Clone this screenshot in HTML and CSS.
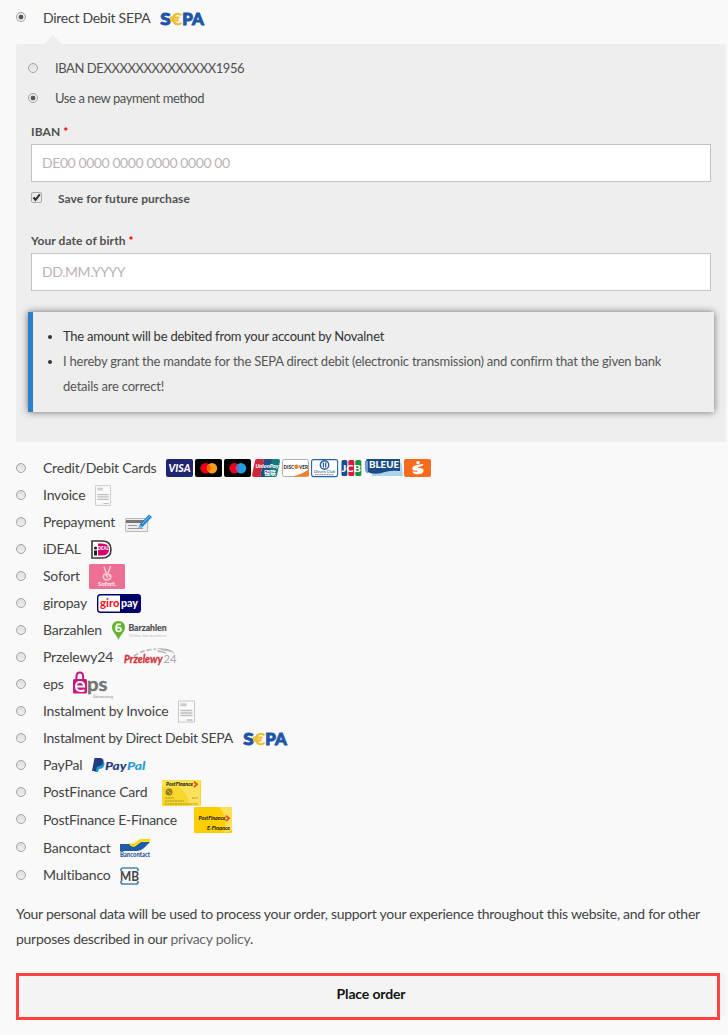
FILE: index.html
```
<!DOCTYPE html>
<html lang="en">
<head>
<meta charset="utf-8">
<title>Checkout payment</title>
<link rel="stylesheet" href="styles.css">
</head>
<body>
<main class="checkout">
  <div class="method method-selected">
    <span class="radio checked"></span>
    <label class="tight">Direct Debit SEPA</label>
    <svg class="icon" width="44" height="14" viewBox="0 0 44 14">
      <text x=".3" y="13.200" font-size="17.300" font-weight="900" fill="#1d56a8" stroke="#1d56a8" stroke-width="1" textLength="10.500" lengthAdjust="spacingAndGlyphs">S</text>
      <path d="M21.500 3.200A5.200 5.200 0 1 0 21.500 10.800M10 5.600H19.500M10 8.300H18.700" fill="none" stroke="#f0bd2c" stroke-width="2.200"/>
      <text x="22.300" y="13.200" font-size="17.300" font-weight="900" fill="#1d56a8" stroke="#1d56a8" stroke-width="1" textLength="21.500" lengthAdjust="spacingAndGlyphs">PA</text>
    </svg>
  </div>

  <section class="panel">
    <div class="saved"><span class="radio"></span><span>IBAN DEXXXXXXXXXXXXXX1956</span></div>
    <div class="saved"><span class="radio checked"></span><span>Use a new payment method</span></div>
    <div class="field-label iban-label">IBAN <b>*</b></div>
    <input class="field" type="text" placeholder="DE00 0000 0000 0000 0000 00">
    <div class="save">
      <svg class="checkbox" width="11" height="11" viewBox="0 0 11 11"><rect x=".5" y=".5" width="10" height="10" rx="1.500" fill="#eaeaea" stroke="#aaa"/><path d="M2.500 5.500l2 2.300L8.800 2.400" fill="none" stroke="#333" stroke-width="2.100"/></svg>
      <span>Save for future purchase</span>
    </div>
    <div class="field-label birth-label">Your date of birth <b>*</b></div>
    <input class="field" type="text" placeholder="DD.MM.YYYY">
    <ul class="notice">
      <li>The amount will be debited from your account by Novalnet</li>
      <li><span>I hereby grant the mandate for the SEPA direct debit (electronic transmission) and confirm that the given bank<br>details are correct!</span></li>
    </ul>
  </section>

  <div class="methods">
    <div class="method"><span class="radio"></span><label>Credit/Debit Cards</label>
      <svg class="icon cards" width="266" height="18" viewBox="0 0 266 18">
        <rect width="27" height="18" rx="2" fill="#21246f"/>
        <text x="2.500" y="12.800" font-size="10.500" font-weight="900" font-style="italic" fill="#fff" textLength="22" lengthAdjust="spacingAndGlyphs">VISA</text>
        <rect x="29" width="27" height="18" rx="2"/>
        <circle cx="39.500" cy="9.300" r="5.200" fill="#eb001b"/><circle cx="46" cy="9.300" r="5.200" fill="#f79e1b"/><path d="M42.750 5.300a5.200 5.200 0 0 1 0 8 5.200 5.200 0 0 1 0-8z" fill="#ff5f00"/>
        <rect x="58" width="27" height="18" rx="2"/>
        <circle cx="68.500" cy="9.300" r="5.200" fill="#eb001b"/><circle cx="75" cy="9.300" r="5.200" fill="#1da1e2"/><path d="M71.750 5.300a5.200 5.200 0 0 1 0 8 5.200 5.200 0 0 1 0-8z" fill="#6c6bbd"/>
        <path d="M91 0h7l-4 18h-6q-2 0-2-2l3-14q0-2 2-2z" fill="#d0253a"/><path d="M98 0h9l-4 18h-9z" fill="#224b83"/><path d="M106 0h6q2 0 2 2l-3 14q0 2-2 2h-7z" fill="#137a80"/>
        <text x="89.500" y="8.500" font-size="6.300" font-weight="900" font-style="italic" fill="#fff" textLength="23" lengthAdjust="spacingAndGlyphs">UnionPay</text>
        <text class="cjk" x="98" y="15.800" font-size="6" font-weight="700" fill="#fff" textLength="12" lengthAdjust="spacingAndGlyphs">银联</text>
        <rect x="116.500" y=".5" width="26" height="17" rx="2" fill="#fff" stroke="#999" stroke-width=".8"/>
        <path d="M143 10v6q0 1.500-2 1.500h-15Q137 15 143 10z" fill="#f58228"/>
        <text x="117.500" y="10" font-size="6.200" font-weight="900" fill="#333" textLength="10.500" lengthAdjust="spacingAndGlyphs">DISC</text><circle cx="130.500" cy="7.800" r="2.200" fill="#f58228"/><text x="133" y="10" font-size="6.200" font-weight="900" fill="#333" textLength="9" lengthAdjust="spacingAndGlyphs">VER</text>
        <rect x="145.600" y=".6" width="26" height="17" rx="2" fill="#fff" stroke="#2765a1" stroke-width="1.100"/>
        <circle cx="158.500" cy="6" r="4.200" fill="#fff" stroke="#2460a0" stroke-width="1.400"/><path d="M157.400 3.500v5M159.700 3.500v5" stroke="#2460a0" stroke-width="1.300"/>
        <text x="148" y="14" font-size="4.500" fill="#17446e" textLength="21" lengthAdjust="spacingAndGlyphs">Diners Club</text><path d="M149 15.700h19" stroke="#5f7d98" stroke-dasharray="1.200 .5"/>
        <rect x="175.500" y="1" width="5.800" height="16" rx="1.500" fill="#164d94"/><rect x="182.300" y="1" width="6" height="16" rx="1.500" fill="#d51c40"/><rect x="189.300" y="1" width="6" height="16" rx="1.500" fill="#159044"/>
        <text x="175.500" y="12.500" font-size="9.500" font-weight="900" fill="#fff" textLength="19.500" lengthAdjust="spacingAndGlyphs">JCB</text>
        <path d="M204 3h29q3 0 3 4l1 10h-31z" fill="#acd4ed"/><path d="M201 0h33v12q-8-1-15 1-8 3-15 1-4-1-4-5V3q0-3 1-3z" fill="#194c86"/><path d="M199 2v8q0 4 3 4V2z" fill="#6f9ec8"/>
        <text x="203" y="8.800" font-size="8.800" font-weight="900" fill="#fff" textLength="30" lengthAdjust="spacingAndGlyphs">BLEUE</text>
        <rect x="238" width="27" height="18" rx="2" fill="#f76b1c"/><circle cx="252" cy="3.600" r="1.700" fill="#fff"/><path d="M257.500 5c-5 .5-10 1-11 3.800-.8 2.400 1.200 3 4 3 2 0 2 1-.2 1l-4-.4c1 4 10.500 4 11.200-.3.300-2.300-1.500-3-4-3-2 0-2-.8-.5-1.300 2-.4 3.800-1 4.500-2.800z" fill="#fff"/>
      </svg></div>
    <div class="method"><span class="radio"></span><label>Invoice</label>
      <svg class="icon faded" width="16" height="21" viewBox="0 0 17 22"><path d="M.5.5h16v21H.5z" fill="#f9f9f9" stroke="#c2c2c2"/><path d="M2.500 3.500h6M2.500 5h6" stroke="#c2c2c2" stroke-width="1.400"/><path d="M2.500 10h12M2.500 12.500h12M2.500 15h12M9 19.500h5.500" stroke="#b5b5b5" stroke-width="1.300"/></svg></div>
    <div class="method"><span class="radio"></span><label>Prepayment</label>
      <svg class="icon" width="28" height="20" viewBox="0 0 28 20"><path d="M.7 5.500h22v13H.7z" fill="#eee" stroke="#b8b8b8"/><path d="M1 8.500h19" stroke="#777" stroke-width="3"/><path d="M3 12.500h9M3 15.500h15" stroke="#999"/><path d="M13 16l2-5L24 1.500l3 2.500-9.500 10z" fill="#2487ca"/><path d="M13 16l2-4 2.300 2z" fill="#8abbe0"/><path d="M17 11L25 3" stroke="#7bc0ec"/></svg></div>
    <div class="method"><span class="radio"></span><label>iDEAL</label>
      <svg class="icon" width="21" height="19" viewBox="0 0 21 19"><path d="M1 1h10q9 0 9 8.500T11 18H1z" fill="#fff" stroke="#3a3a3a" stroke-width="1.600"/><path d="M7 3.500h4q7 0 7 6t-7 6H7z" fill="#d50072"/><circle cx="4.500" cy="8" r="1.600" fill="#222"/><path d="M3 10.500h3v5H3z" fill="#222"/><text x="6.800" y="9.800" font-size="5.600" font-weight="900" fill="#fff" textLength="10.800" lengthAdjust="spacingAndGlyphs">DEAL</text></svg></div>
    <div class="method"><span class="radio"></span><label>Sofort</label>
      <svg class="icon near" width="36" height="25" viewBox="0 0 36 25"><rect width="36" height="25" rx="1.500" fill="#ed6f93"/><path d="M15.200 3.200l2 6M21.500 2.500l-2.700 7M15 10.500h5.500q2 1 1.300 3-1 2.500-4 2.500t-3.700-3.500zM17 11l1.500 2.500M20 10.500l1 2" fill="none" stroke="#fbc9d8" stroke-width="1.500" stroke-linecap="round"/><text x="9" y="22" font-size="6" font-weight="900" fill="#fbd3df" stroke="#fbd3df" stroke-width=".3" textLength="18" lengthAdjust="spacingAndGlyphs">Sofort.</text></svg></div>
    <div class="method"><span class="radio"></span><label>giropay</label>
      <svg class="icon" width="44" height="19" viewBox="0 0 44 19"><rect x=".7" y=".7" width="42.600" height="17.600" rx="2.500" fill="#fff" stroke="#000269" stroke-width="1.400"/><path d="M23 1h18q2 0 2 2v13q0 2-2 2H23z" fill="#000269"/><text x="3" y="12.500" font-size="10.500" font-weight="900" fill="#f21a2b" textLength="19.500" lengthAdjust="spacingAndGlyphs">giro</text><text x="24" y="12.500" font-size="10.500" font-weight="900" fill="#fff" textLength="17" lengthAdjust="spacingAndGlyphs">pay</text></svg></div>
    <div class="method"><span class="radio"></span><label>Barzahlen</label>
      <svg class="icon" width="56" height="19" viewBox="0 0 56 19"><path d="M6.500 0C2.500 0 0 2.800 0 6.300 0 11 5 14 6.500 19 8 14 13 11 13 6.300 13 2.800 10.500 0 6.500 0z" fill="#62b32d"/><path d="M9 3.300H5.300Q4 5 4 7.500q0 3 2.500 3T9 8.300Q9 6 5 6.800" fill="none" stroke="#fff" stroke-width="1.700"/><text x="16.500" y="9.500" font-size="8.600" font-weight="700" fill="#4c4c4c" stroke="#4c4c4c" stroke-width=".2" textLength="38" lengthAdjust="spacingAndGlyphs">Barzahlen</text><text x="17" y="15.800" font-size="4.600" fill="#bbb" textLength="37" lengthAdjust="spacingAndGlyphs">Online bar bezahlen</text></svg></div>
    <div class="method"><span class="radio"></span><label>Przelewy24</label>
      <svg class="icon przelewy" width="53" height="19" viewBox="0 0 53 19"><path d="M10 8Q18 2 32 1" fill="none" stroke="#bbb" stroke-width="1.700" stroke-dasharray="5 2"/><path d="M32 0q16 0 19 6-4-3-10-3zM33 2q9 1 10 4-5-2-9-2z" fill="#b5b5b5"/><text x="0" y="15.300" font-size="11.500" font-weight="700" font-style="italic" fill="#d13239" stroke="#d13239" stroke-width=".3" textLength="38.500" lengthAdjust="spacingAndGlyphs">Przelewy</text><text x="39.500" y="15" font-size="12" fill="#aaa" textLength="13" lengthAdjust="spacingAndGlyphs">24</text></svg></div>
    <div class="method"><span class="radio"></span><label>eps</label>
      <svg class="icon near" width="41" height="26" viewBox="0 0 41 26"><path d="M3.500 8V4.500q0-4 3.300-4t3.300 4V8" fill="none" stroke="#ca1680" stroke-width="2"/><rect y="7" width="14" height="14.500" rx="1.500" fill="#ca1680"/><path d="M2.700 14.500h8.500q0-4.500-4.200-4.500-4 0-4 4.300 0 4.700 4.500 4.700 2 0 4-.8" fill="none" stroke="#fff" stroke-width="2"/><text x="14" y="18.700" font-size="19" font-weight="700" fill="#747474" stroke="#747474" stroke-width=".4" textLength="20.500" lengthAdjust="spacingAndGlyphs">ps</text><text x="20" y="25.500" font-size="3.600" fill="#888" textLength="20" lengthAdjust="spacingAndGlyphs">Überweisung</text></svg></div>
    <div class="method"><span class="radio"></span><label class="wide">Instalment by Invoice</label>
      <svg class="icon" width="17" height="23" viewBox="0 0 17 22"><path d="M.5.5h16v21H.5z" fill="#fbfbfb" stroke="#c5c5c5"/><path d="M2.500 3.500h6M2.500 5h6" stroke="#cacaca" stroke-width="1.400"/><path d="M2.500 10h12M2.500 12.500h12M2.500 15h12M9 19.500h5.500" stroke="#bdbdbd" stroke-width="1.300"/></svg></div>
    <div class="method"><span class="radio"></span><label class="tight">Instalment by Direct Debit SEPA</label>
      <svg class="icon" width="44" height="14" viewBox="0 0 44 14">
        <text x=".3" y="13.200" font-size="17.300" font-weight="900" fill="#1d56a8" stroke="#1d56a8" stroke-width="1" textLength="10.500" lengthAdjust="spacingAndGlyphs">S</text>
        <path d="M21.500 3.200A5.200 5.200 0 1 0 21.500 10.800M10 5.600H19.500M10 8.300H18.700" fill="none" stroke="#f0bd2c" stroke-width="2.200"/>
        <text x="22.300" y="13.200" font-size="17.300" font-weight="900" fill="#1d56a8" stroke="#1d56a8" stroke-width="1" textLength="21.500" lengthAdjust="spacingAndGlyphs">PA</text>
      </svg></div>
    <div class="method"><span class="radio"></span><label>PayPal</label>
      <svg class="icon" width="54" height="15" viewBox="0 0 54 15"><path d="M4 3h6q3.500 1 2 5-1 3-5 3l-1 3H2.500z" fill="#179bd7"/><path d="M2.500 0H8q4.500.5 3.200 4.800Q10 8.500 5 8.500L4 13H0z" fill="#253b80"/><text x="13" y="12" font-size="12" font-weight="900" font-style="italic" fill="#253b80" textLength="21.500" lengthAdjust="spacingAndGlyphs">Pay</text><text x="35" y="12" font-size="12" font-weight="900" font-style="italic" fill="#279bd6" textLength="18.500" lengthAdjust="spacingAndGlyphs">Pal</text></svg></div>
    <div class="method"><span class="radio"></span><label>PostFinance Card</label>
      <svg class="icon postcard" width="39" height="26" viewBox="0 0 39 26"><rect width="39" height="26" rx="1" fill="#f8d72c"/><path d="M17 7q10 8 11 19h10V3z" fill="#fae15b"/><path d="M0 0h38v7H0z" fill="#fbe24d"/><text x="4" y="5.800" font-size="5.600" font-weight="900" font-style="italic" fill="#222" textLength="27" lengthAdjust="spacingAndGlyphs">PostFinance</text><path d="M32 1.700l3 2.500-3 3" fill="none" stroke="#e3501d" stroke-width="1.800"/><circle cx="7" cy="12" r="3.500" fill="#927c2b"/><path d="M5 10l4 4" stroke="#d8bb2c"/><path d="M3 18h9M30 18h6M3 21h19M3 24h33" stroke="#a08b2b" stroke-width=".9" stroke-dasharray="2 .5"/></svg></div>
    <div class="method tall"><span class="radio"></span><label class="tight">PostFinance E-Finance</label>
      <svg class="icon efinance" width="38" height="26" viewBox="0 0 38 26"><rect width="38" height="26" rx="1" fill="#fccd00"/><path d="M25 0h13v23l-8 3Q35 11 25 0z" fill="#ffdf57"/><text x="4.500" y="13.300" font-size="5.600" font-weight="900" font-style="italic" fill="#222" textLength="27" lengthAdjust="spacingAndGlyphs">PostFinance</text><path d="M32 8.700l3 2.500-3 3" fill="none" stroke="#e3501d" stroke-width="1.800"/><text x="13" y="22.800" font-size="5.300" font-weight="900" font-style="italic" fill="#222" textLength="23" lengthAdjust="spacingAndGlyphs">E-Finance</text></svg></div>
    <div class="method tall"><span class="radio"></span><label>Bancontact</label>
      <svg class="icon near" width="30" height="19" viewBox="0 0 30 19"><path d="M0 5h10q0 3 5 2l6-4h9l-6 6q-3 3-7 3H0z" fill="#1e5ba8"/><path d="M9 4.500h5L20 0h10v2.800h-9l-6 4.700q-4 1-6-3z" fill="#ffd800"/><text x="0" y="17.900" font-size="6.500" font-weight="900" fill="#28589a" textLength="30" lengthAdjust="spacingAndGlyphs">Bancontact</text></svg></div>
    <div class="method"><span class="radio"></span><label>Multibanco</label>
      <svg class="icon near" width="19" height="18" viewBox="0 0 19 18"><path d="M1 4V3q0-2 2-2h13q2 0 2 2v1M1 14v1q0 2 2 2h13q2 0 2-2v-1" fill="none" stroke="#4685b8" stroke-width="1.700"/><text x="0" y="13.700" font-size="13.500" font-weight="700" fill="#444" textLength="19" lengthAdjust="spacingAndGlyphs">MB</text></svg></div>
  </div>

  <p class="privacy">Your personal data will be used to process your order, support your experience throughout this website, and for other<br>purposes described in our <a>privacy policy</a>.</p>
  <div class="order"><button class="place-order">Place order</button></div>
</main>
</body>
</html>
```
FILE: styles.css
```
* { box-sizing: border-box; }
body {
  margin: 0;
  background: #f9f9f9;
  color: #434343;
  font: 14px/25px Lato, "Noto Sans", sans-serif;
}
.icon { flex: none; overflow: visible; font-family: Lato, "Noto Sans CJK SC", sans-serif; }
.cjk { font-family: "Noto Sans CJK SC", sans-serif; }
.checkout { width: 728px; height: 1035px; padding: 5px 2px 0 16px; overflow: hidden; }

.method { display: flex; align-items: center; height: 27px; }
.method label { margin: 0 10px 2px 17px; letter-spacing: -0.19px; white-space: nowrap; }
.method label.tight { letter-spacing: -0.27px; }
.method label.wide { letter-spacing: -0.22px; }
.method.tall { height: 28px; }
.method .radio { margin-bottom: 2px; }
.method-selected .radio { margin-bottom: 4px; }
.cards { margin-bottom: 1px; }
.near { margin-left: -1px; }
.przelewy { margin-left: 1px; }
.postcard { margin-left: 5px; }
.efinance { margin-left: 7px; }
.faded { opacity: .85; }
.radio {
  flex: none;
  width: 10px;
  height: 10px;
  border: 1px solid #a3a3a3;
  border-radius: 50%;
  background: linear-gradient(#dedede, #f0f0f0);
}
.radio.checked { background: radial-gradient(circle, #555 0 2px, #ededed 2.700px); }

.panel {
  position: relative;
  width: 710px;
  height: 398px;
  margin-top: 12px;
  padding: 12px 15px 0;
  border-radius: 2px;
  background: #eee;
  color: #515151;
  font-size: 13px;
}
.panel::before {
  content: "";
  position: absolute;
  left: 28px;
  top: -9px;
  border: 9px solid transparent;
  border-top: 0;
  border-bottom-color: #eee;
}
.saved { display: flex; align-items: center; height: 25px; margin: 0 0 5px -3px; gap: 17px; letter-spacing: -0.42px; }
.saved .radio { margin-bottom: 2px; }
.field-label { height: 20px; font-size: 12px; line-height: 20px; font-weight: 700; letter-spacing: 0.08px; }
.field-label b { color: #f00; }
.iban-label { margin-top: 11px; margin-bottom: 2px; }
.field {
  display: block;
  width: 680px;
  height: 38px;
  padding: 0 10px 1px;
  border: 1px solid #c6c0c4;
  background: #fff;
  font: 14px Lato, sans-serif;
  letter-spacing: -0.42px;
}
.field::placeholder { color: #bbb3b7; opacity: 1; }
.save { display: flex; align-items: center; gap: 16px; height: 20px; margin-top: 6px; font-size: 12px; font-weight: 700; letter-spacing: 0.07px; }
.checkbox { margin-bottom: 2px; }
.birth-label { margin-top: 23px; margin-bottom: 2px; }
.notice {
  width: 686px;
  height: 100px;
  margin: 21px 0 0 -3px;
  padding: 12px 0 0 30px;
  border-left: 5px solid #2b80ca;
  box-shadow: 0 0 7px rgba(0, 0, 0, .55);
  color: #333;
  letter-spacing: -0.24px;
}
.notice li span { color: #555; letter-spacing: -0.22px; }
.methods { margin-top: 13px; }
.privacy { margin: 12px 0 0; letter-spacing: -0.277px; white-space: nowrap; }
.privacy a { color: #666; }
.order { width: 710px; height: 43px; margin-top: 23px; background: #f4f4f4; }
.place-order {
  display: block;
  width: 704px;
  height: 47px;
  margin-top: -1px;
  padding: 0 0 6px 6px;
  border: 3px solid #ff4242;
  background: #f4f4f4;
  color: #111;
  font: 700 14px Lato, sans-serif;
  letter-spacing: -0.15px;
}
```
